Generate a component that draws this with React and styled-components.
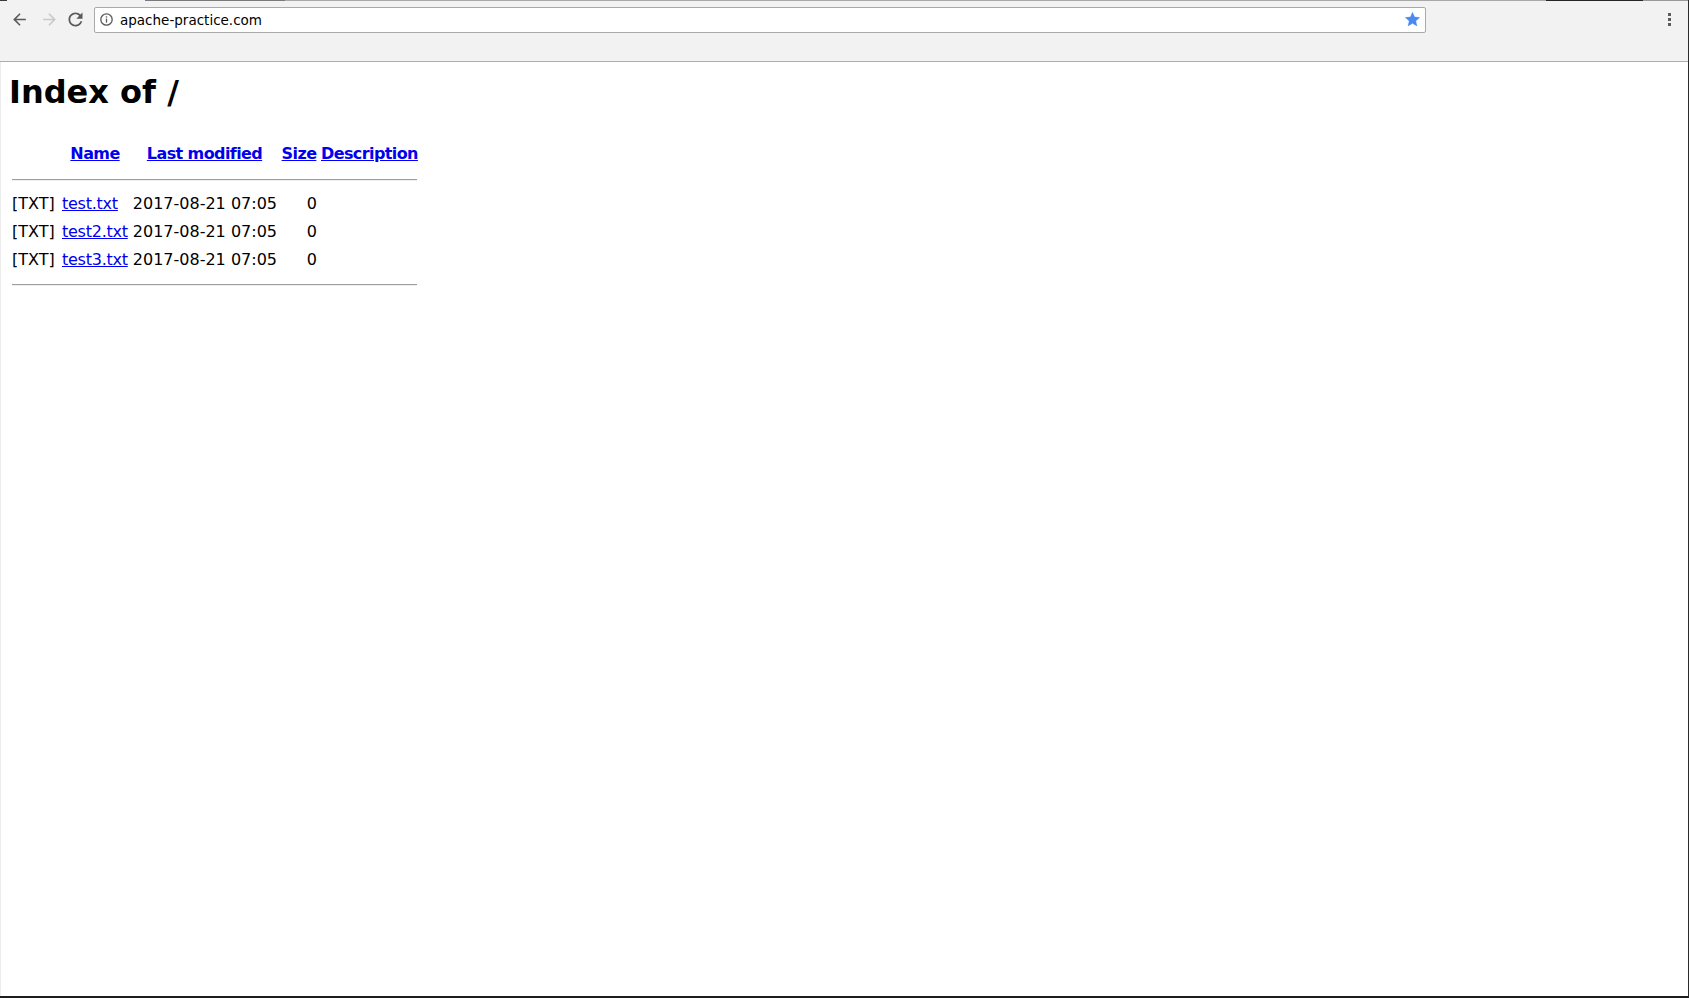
import React from 'react';
import styled, { createGlobalStyle } from 'styled-components';

// Apache-style directory listing inside an old Chrome window frame

const GlobalStyle = createGlobalStyle`
  html, body {
    margin: 0;
    padding: 0;
    background: #ffffff;
    overflow: hidden;
  }
`;

const Window = styled.div`
  width: 1689px;
  height: 998px;
  box-sizing: border-box;
  display: flex;
  flex-direction: column;
  border-right: 1px solid #2b2b2b;
  border-bottom: 2px solid #1e1e1e;
  background: #ffffff;
`;

const Toolbar = styled.div`
  height: 62px;
  box-sizing: border-box;
  flex-shrink: 0;
  display: flex;
  flex-direction: column;
  background: #f2f2f2;
  border-bottom: 1px solid #acacac;
`;

// 1px window edge left over from the screen capture
const TopEdge = styled.div`
  height: 1px;
  flex-shrink: 0;
  background: linear-gradient(
    to right,
    #3a3a3a 0 7px,
    #f2f2f2 7px 145px,
    #7a7a7a 145px 285px,
    #a8a8a8 285px 1546px,
    #262626 1546px 1643px,
    #9a9a9a 1643px
  );
`;

const NavRow = styled.div`
  height: 37px;
  display: flex;
  align-items: center;
  padding-left: 4px;
`;

const NavButton = styled.div`
  width: ${props => props.$w}px;
  height: 26px;
  display: flex;
  align-items: center;
  justify-content: center;
  flex-shrink: 0;
  color: ${props => (props.$disabled ? '#c9c9c9' : '#5a5a5a')};
`;

const AddressBar = styled.div`
  flex: 1;
  height: 26px;
  margin-left: 8px;
  box-sizing: border-box;
  display: flex;
  align-items: center;
  gap: 7px;
  padding: 0 4px 0 5px;
  background: #ffffff;
  border: 1px solid #a9a9a9;
  border-radius: 2px;
`;

const UrlText = styled.span`
  flex: 1;
  font-family: "DejaVu Sans", Verdana, sans-serif;
  font-size: 13.5px;
  color: #000000;
  line-height: 24px;
  padding-top: 1px;
`;

const MenuArea = styled.div`
  width: 262px;
  display: flex;
  justify-content: flex-end;
  padding-right: 17px;
  box-sizing: border-box;
`;

const Dots = styled.div`
  display: flex;
  flex-direction: column;
  gap: 2px;
`;

const Dot = styled.span`
  width: 3px;
  height: 3px;
  background: #5c5c5c;
`;

const Page = styled.div`
  flex: 1;
  background: #ffffff;
  border-left: 1px solid #ececec;
  padding: 10px 0 0 8px;
  font-family: "DejaVu Sans", Verdana, sans-serif;
  color: #000000;
`;

const Title = styled.h1`
  margin: 0;
  font-size: 32px;
  line-height: 40px;
  font-weight: bold;
`;

const Listing = styled.div`
  display: grid;
  grid-template-columns: 46px 66px 145px 36px 96px;
  column-gap: 4px;
  width: max-content;
  margin: 28px 0 0 3px;
  font-size: 16px;
`;

const HeaderCell = styled.div`
  line-height: 28px;
  height: 28px;
  text-align: center;
  font-weight: bold;
  letter-spacing: -0.6px;
  white-space: nowrap;
`;

const Cell = styled.div`
  line-height: 28px;
  height: 28px;
  white-space: nowrap;
  text-align: ${props => props.$align || 'left'};
`;

const Link = styled.a`
  color: #0000ee;
  text-decoration: underline;
`;

const FileLink = styled(Link)`
  letter-spacing: -0.25px;
`;

const Divider = styled.div`
  grid-column: 1 / -1;
  height: 1px;
  background: #9f9f9f;
  border-bottom: 1px solid #eeeeee;
  margin: ${props => props.$top}px 0 ${props => props.$bottom}px;
`;

const files = [
  { name: 'test.txt', modified: '2017-08-21 07:05', size: '0' },
  { name: 'test2.txt', modified: '2017-08-21 07:05', size: '0' },
  { name: 'test3.txt', modified: '2017-08-21 07:05', size: '0' },
];

function BackIcon() {
  return (
    <svg width="19" height="19" viewBox="0 0 24 24" fill="currentColor">
      <path d="M20 11H7.83l5.59-5.59L12 4l-8 8 8 8 1.41-1.41L7.83 13H20v-2z" />
    </svg>
  );
}

function ForwardIcon() {
  return (
    <svg width="19" height="19" viewBox="0 0 24 24" fill="currentColor">
      <path d="M4 11h12.17l-5.59-5.59L12 4l8 8-8 8-1.41-1.41L16.17 13H4v-2z" />
    </svg>
  );
}

function ReloadIcon() {
  return (
    <svg width="21" height="21" viewBox="0 0 24 24" fill="currentColor">
      <path d="M17.65 6.35C16.2 4.9 14.21 4 12 4c-4.42 0-7.99 3.58-7.99 8s3.57 8 7.99 8c3.73 0 6.84-2.55 7.73-6h-2.08c-.82 2.33-3.04 4-5.65 4-3.31 0-6-2.69-6-6s2.69-6 6-6c1.66 0 3.14.69 4.22 1.78L13 11h7V4l-2.35 2.35z" />
    </svg>
  );
}

function InfoIcon() {
  return (
    <svg width="13" height="13" viewBox="0 0 13 13">
      <circle cx="6.5" cy="6.5" r="5.7" fill="none" stroke="#5a5a5a" strokeWidth="1.3" />
      <rect x="5.85" y="5.6" width="1.3" height="4" fill="#5a5a5a" />
      <rect x="5.85" y="3.3" width="1.3" height="1.3" fill="#5a5a5a" />
    </svg>
  );
}

function StarIcon() {
  return (
    <svg width="17" height="17" viewBox="0 0 24 24">
      <path
        d="M12 17.27L18.18 21l-1.64-7.03L22 9.24l-7.19-.61L12 2 9.19 8.63 2 9.24l5.46 4.73L5.82 21z"
        fill="#4a8af4"
        stroke="#3b78e7"
        strokeWidth="0.6"
      />
    </svg>
  );
}

export default function App() {
  return (
    <>
      <GlobalStyle />
      <Window>
        <Toolbar>
          <TopEdge />
          <NavRow>
            <NavButton $w={30}><BackIcon /></NavButton>
            <NavButton $w={30} $disabled><ForwardIcon /></NavButton>
            <NavButton $w={22}><ReloadIcon /></NavButton>
            <AddressBar>
              <InfoIcon />
              <UrlText>apache-practice.com</UrlText>
              <StarIcon />
            </AddressBar>
            <MenuArea>
              <Dots>
                <Dot />
                <Dot />
                <Dot />
              </Dots>
            </MenuArea>
          </NavRow>
        </Toolbar>

        <Page>
          <Title>Index of /</Title>
          <Listing>
            <HeaderCell />
            <HeaderCell><Link href="#">Name</Link></HeaderCell>
            <HeaderCell><Link href="#">Last modified</Link></HeaderCell>
            <HeaderCell><Link href="#">Size</Link></HeaderCell>
            <HeaderCell><Link href="#">Description</Link></HeaderCell>

            <Divider $top={11} $bottom={9} />

            {files.map(file => (
              <React.Fragment key={file.name}>
                <Cell>[TXT]</Cell>
                <Cell><FileLink href="#">{file.name}</FileLink></Cell>
                <Cell $align="right">{file.modified}</Cell>
                <Cell $align="right">{file.size}</Cell>
                <Cell />
              </React.Fragment>
            ))}

            <Divider $top={10} $bottom={0} />
          </Listing>
        </Page>
      </Window>
    </>
  );
}
